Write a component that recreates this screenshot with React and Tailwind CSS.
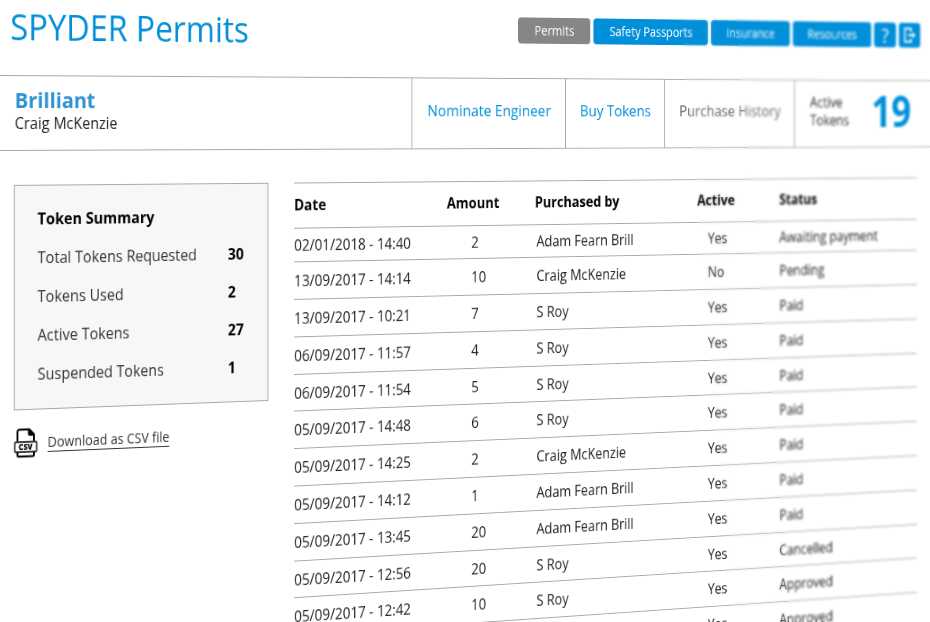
import React from 'react'

const navItems = [
  { label: 'Permits', className: 'w-[91px] bg-[#868686]' },
  { label: 'Safety Passports', className: 'w-[148px] bg-[#008fd9]' },
  { label: 'Insurance', className: 'w-[105px] bg-[#008fd9]' },
  { label: 'Resources', className: 'w-[107px] bg-[#008fd9]' }
]

const summary = [
  { label: 'Total Tokens Requested', value: 30 },
  { label: 'Tokens Used', value: 2 },
  { label: 'Active Tokens', value: 27 },
  { label: 'Suspended Tokens', value: 1 }
]

const purchases = [
  { date: '02/01/2018 - 14:40', amount: 2, by: 'Adam Fearn Brill', active: 'Yes', status: 'Awaiting payment' },
  { date: '13/09/2017 - 14:14', amount: 10, by: 'Craig McKenzie', active: 'No', status: 'Pending' },
  { date: '13/09/2017 - 10:21', amount: 7, by: 'S Roy', active: 'Yes', status: 'Paid' },
  { date: '06/09/2017 - 11:57', amount: 4, by: 'S Roy', active: 'Yes', status: 'Paid' },
  { date: '06/09/2017 - 11:54', amount: 5, by: 'S Roy', active: 'Yes', status: 'Paid' },
  { date: '05/09/2017 - 14:48', amount: 6, by: 'S Roy', active: 'Yes', status: 'Paid' },
  { date: '05/09/2017 - 14:25', amount: 2, by: 'Craig McKenzie', active: 'Yes', status: 'Paid' },
  { date: '05/09/2017 - 14:12', amount: 1, by: 'Adam Fearn Brill', active: 'Yes', status: 'Paid' },
  { date: '05/09/2017 - 13:45', amount: 20, by: 'Adam Fearn Brill', active: 'Yes', status: 'Paid' },
  { date: '05/09/2017 - 12:56', amount: 20, by: 'S Roy', active: 'Yes', status: 'Cancelled' },
  { date: '05/09/2017 - 12:42', amount: 10, by: 'S Roy', active: 'Yes', status: 'Approved' },
  { date: '', amount: '', by: '', active: 'Yes', status: 'Approved' }
]

function LogoutIcon() {
  return (
    <svg viewBox="0 0 20 20" className="h-5 w-5" fill="none" stroke="currentColor" strokeWidth="2">
      <path d="M12 6V2.5H3.5v15H12V14" />
      <path d="M8 10h7" />
      <path d="M14 6.5L18.5 10L14 13.5z" fill="currentColor" stroke="none" />
    </svg>
  )
}

function CsvIcon() {
  return (
    <svg viewBox="0 0 26 30" className="h-[30px] w-[26px]" fill="none" stroke="#000" strokeWidth="2" strokeLinejoin="round">
      <path d="M4 13V3.5a2 2 0 0 1 2-2h11l5 5V13" />
      <path d="M15.5 1l7 7h-5a2 2 0 0 1-2-2z" fill="#000" stroke="none" />
      <path d="M4 24v3a1.5 1.5 0 0 0 1.5 1.5h15A1.5 1.5 0 0 0 22 27v-3" />
      <rect x="1" y="14" width="24" height="10" rx="1" strokeWidth="1.3" />
      <text x="13" y="22" textAnchor="middle" fill="#000" stroke="none" fontSize="8" fontWeight="800">
        CSV
      </text>
    </svg>
  )
}

/**
 * TopBar - product name and main navigation
 */
function TopBar() {
  return (
    <header className="flex h-[75px] items-start justify-between pl-[11px] pr-[19px]">
      <h1 className="text-4xl leading-[54px] text-[#008fd9]">SPYDER Permits</h1>
      <nav className="flex gap-1 pt-[10px] text-sm text-white">
        {navItems.map((item) => (
          <button key={item.label} className={`h-7 rounded-sm font-medium ${item.className}`}>
            {item.label}
          </button>
        ))}
        <button aria-label="Help" className="h-7 w-[30px] rounded-sm bg-[#008fd9] text-[22px] leading-7 font-medium">
          ?
        </button>
        <button aria-label="Log out" className="flex h-7 w-[30px] items-center justify-center rounded-sm bg-[#008fd9]">
          <LogoutIcon />
        </button>
      </nav>
    </header>
  )
}

/**
 * AccountBar - company, token actions and the active token count
 */
function AccountBar() {
  return (
    <section className="flex h-[76px] border-y border-[#a8a8a8]">
      <div className="flex-1 pl-4 pt-[9px]">
        <h2 className="text-[22px] leading-7 font-bold text-[#2e93d3]">Brilliant</h2>
        <p className="leading-5 text-[#222]">Craig McKenzie</p>
      </div>
      <nav className="flex text-[17px] text-[#008fd9]">
        <a href="#nominate" className="flex w-[190px] items-center justify-center border-l border-[#a8a8a8] pb-[6px]">
          Nominate Engineer
        </a>
        <a href="#buy" className="flex w-[127px] items-center justify-center border-l border-[#a8a8a8] pb-[6px]">
          Buy Tokens
        </a>
        <a href="#history" className="flex w-[172px] items-center justify-center border-l border-[#a8a8a8] pb-[6px] text-[#666]">
          Purchase History
        </a>
      </nav>
      <div className="flex w-48 items-center gap-7 border-l border-[#a8a8a8] pb-[6px] pl-5">
        <p className="w-14 leading-5 text-[#333]">Active Tokens</p>
        <p className="text-5xl font-bold text-[#008fd9]">19</p>
      </div>
    </section>
  )
}

/**
 * TokenSummary - totals box with the CSV download below it
 */
function TokenSummary() {
  return (
    <aside className="w-[287px] shrink-0">
      <div className="border border-[#a8a8a8] bg-[#f7f7f7] pt-[21px] pr-[10px] pb-4 pl-[25px]">
        <h3 className="mb-[7px] leading-6 font-bold text-black">Token Summary</h3>
        <dl>
          {summary.map((row) => (
            <div key={row.label} className="flex h-[39px] items-center justify-between">
              <dt className="text-[#333]">{row.label}</dt>
              <dd className="w-9 font-bold text-black">{row.value}</dd>
            </div>
          ))}
        </dl>
      </div>
      <div className="mt-[18px] flex items-center gap-[11px]">
        <CsvIcon />
        <a href="#csv" className="border-b border-[#333] text-sm leading-[18px] text-[#333]">
          Download as CSV file
        </a>
      </div>
    </aside>
  )
}

/**
 * PurchaseTable - history of token purchases
 */
function PurchaseTable() {
  return (
    <table className="w-full table-fixed border-t border-[#a8a8a8] text-left text-[#222]">
      <thead>
        <tr className="h-[47px] border-b border-[#a8a8a8] text-black">
          <th className="w-[183px] p-0 pb-[2px] font-bold">Date</th>
          <th className="w-[109px] p-0 pb-[2px] font-bold">Amount</th>
          <th className="w-[208px] p-0 pb-[2px] font-bold">Purchased by</th>
          <th className="w-[109px] p-0 pb-[2px] font-bold">Active</th>
          <th className="p-0 pb-[2px] font-bold">Status</th>
        </tr>
      </thead>
      <tbody>
        {purchases.map((row, index) => (
          <tr key={index} className="h-[39px] border-b border-[#a8a8a8] first:h-[35px] nth-[5n]:h-[38px]">
            <td className="p-0">{row.date}</td>
            <td className="p-0 pl-[30px]">{row.amount}</td>
            <td className="p-0 pl-[2px]">{row.by}</td>
            <td className="p-0 pl-[14px]">{row.active}</td>
            <td className="p-0">{row.status}</td>
          </tr>
        ))}
      </tbody>
    </table>
  )
}

function App() {
  return (
    <div className="relative h-screen overflow-hidden bg-white font-['Open_Sans','Noto_Sans',sans-serif]">
      {/* The page, turned away from the viewer on its right side */}
      <div className="w-[124%] origin-[0px_120px] [transform:perspective(3300px)_rotateY(23deg)]">
        <TopBar />
        <AccountBar />
        <main className="flex gap-[30px] pt-[34px] pr-6 pl-[15px]">
          <TokenSummary />
          <div className="flex-1">
            <PurchaseTable />
          </div>
        </main>
      </div>

      {/* Depth of field: the far side goes out of focus in two steps */}
      <div className="pointer-events-none absolute inset-0 opacity-50 backdrop-blur-[1px] [clip-path:polygon(73%_0,79%_0,85%_100%,79%_100%)]" />
      <div className="pointer-events-none absolute inset-0 backdrop-blur-[1px] [clip-path:polygon(79%_0,100%_0,100%_100%,85%_100%)]" />
    </div>
  )
}

export default App
